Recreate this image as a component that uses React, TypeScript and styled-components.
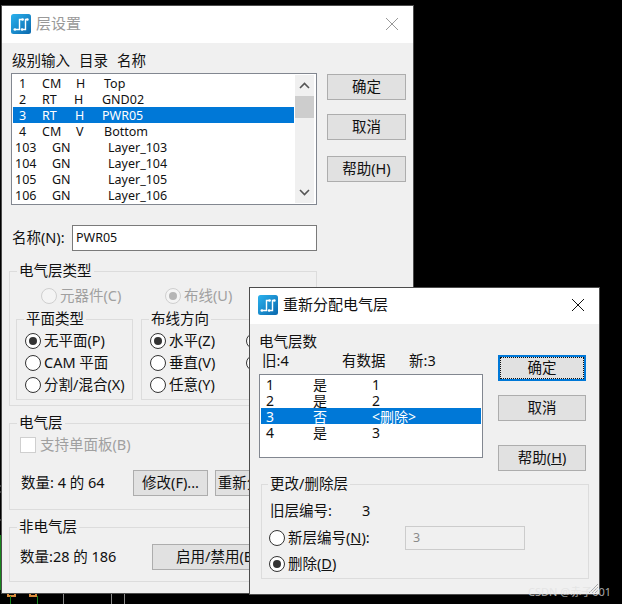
import React from 'react';
import styled, { createGlobalStyle } from 'styled-components';

const GlobalStyle = createGlobalStyle`
  html, body {
    margin: 0;
    background: #000;
  }
  body {
    font-family: "Noto Sans", "Noto Sans CJK SC", sans-serif;
    font-size: 14.5px;
    line-height: 16px;
    color: #111;
  }
  * {
    box-sizing: border-box;
  }
`;

interface WindowProps {
  $left: number;
  $top: number;
  $width: number;
  $height: number;
}

const Desktop = styled.div`
  position: relative;
  width: 622px;
  height: 604px;
  overflow: hidden;
  background: #000;
`;

const Backdrop = styled.svg`
  position: absolute;
  left: 0;
  top: 0;
`;

const Window = styled.div<WindowProps>`
  position: absolute;
  left: ${p => p.$left}px;
  top: ${p => p.$top}px;
  width: ${p => p.$width}px;
  height: ${p => p.$height}px;
  display: flex;
  flex-direction: column;
  background: #f0f0f0;
  border: 1px solid #4c4c4c;
  overflow: hidden;
`;

const TitleBar = styled.div<{ $height: number; $pad: number; $bottom: number }>`
  height: ${p => p.$height}px;
  flex: none;
  display: flex;
  align-items: center;
  gap: 5px;
  padding: 0 0 ${p => p.$bottom}px ${p => p.$pad}px;
  background: #fff;
`;

const TitleText = styled.span<{ $inactive?: boolean }>`
  flex: 1;
  padding-bottom: 2px;
  font-size: 15px;
  color: ${p => (p.$inactive ? '#999' : '#111')};
`;

const IconBox = styled.svg`
  flex: none;
`;

const CloseBox = styled.svg`
  flex: none;
  margin-right: 14px;
`;

const Body = styled.div<{ $top: number }>`
  flex: 1;
  padding: ${p => p.$top}px 0 0 9px;
`;

const TopRow = styled.div`
  display: flex;
`;

const Column = styled.div<{ $width: number }>`
  width: ${p => p.$width}px;
  flex: none;
`;

const ColumnHead = styled.div`
  display: flex;
  gap: 9px;
  height: 21px;
  margin-left: 1px;
`;

const ButtonColumn = styled.div<{ $left: number; $top: number }>`
  display: flex;
  flex-direction: column;
  align-items: flex-start;
  margin-left: ${p => p.$left}px;
  padding-top: ${p => p.$top}px;
`;

const Button = styled.button<{ $width?: number; $top?: number; $left?: number; $default?: boolean }>`
  position: relative;
  width: ${p => p.$width || 79}px;
  height: 26px;
  flex: none;
  margin: ${p => p.$top || 0}px 0 0 ${p => p.$left || 0}px;
  padding: 0 0 2px;
  font: inherit;
  color: #111;
  white-space: nowrap;
  overflow: hidden;
  background: #e1e1e1;
  border: ${p => (p.$default ? '2px solid #0078d7' : '1px solid #adadad')};
  outline: ${p => (p.$default ? '1px dotted #111' : 'none')};
  outline-offset: -3px;
`;

const ListBox = styled.div<{ $height: number; $top?: number }>`
  display: flex;
  height: ${p => p.$height}px;
  margin-top: ${p => p.$top || 0}px;
  padding: 1px;
  background: #fff;
  border: 1px solid #828790;
  overflow: hidden;
`;

const ListRows = styled.div`
  flex: 1;
  min-width: 0;
`;

const ListRow = styled.div<{ $cols: string; $indent: number; $size: number; $selected?: boolean }>`
  display: grid;
  grid-template-columns: ${p => p.$cols};
  height: 16px;
  padding-left: ${p => p.$indent}px;
  font-size: ${p => p.$size}px;
  line-height: 17px;
  white-space: nowrap;
  background: ${p => (p.$selected ? '#0078d7' : 'transparent')};
  color: ${p => (p.$selected ? '#fff' : '#111')};
`;

const ScrollBar = styled.div`
  width: 19px;
  flex: none;
  margin: 0 1px 0 1px;
  display: flex;
  flex-direction: column;
  align-items: stretch;
  background: #f0f0f0;
`;

const ScrollArrow = styled.svg`
  display: block;
  width: 19px;
  height: 21px;
  flex: none;
`;

const ScrollThumb = styled.div`
  height: 22px;
  flex: none;
  background: #cdcdcd;
`;

const ScrollTrack = styled.div`
  flex: 1;
`;

const NameRow = styled.div`
  display: flex;
  align-items: center;
  margin-top: 20px;
  padding-left: 1px;
`;

const NameLabel = styled.label`
  width: 60px;
  flex: none;
  padding-bottom: 2px;
`;

const TextField = styled.div<{ $width: number; $height: number; $disabled?: boolean }>`
  width: ${p => p.$width}px;
  height: ${p => p.$height}px;
  display: flex;
  align-items: center;
  padding-left: ${p => (p.$disabled ? 7 : 3)}px;
  font-size: 12.5px;
  background: ${p => (p.$disabled ? '#f0f0f0' : '#fff')};
  border: 1px solid ${p => (p.$disabled ? '#ccc' : '#7a7a7a')};
  color: ${p => (p.$disabled ? '#8a8a8a' : '#111')};
`;

const GroupBox = styled.div<{ $width: number; $height: number; $top: number; $left?: number; $pad: string }>`
  position: relative;
  width: ${p => p.$width}px;
  height: ${p => p.$height}px;
  flex: none;
  margin-top: ${p => p.$top}px;
  margin-left: ${p => p.$left || 0}px;
  padding: ${p => p.$pad};
  border: 1px solid #dcdcdc;
`;

const GroupTitle = styled.span<{ $left: number }>`
  position: absolute;
  top: -10px;
  left: ${p => p.$left}px;
  padding: 0 2px;
  background: #f0f0f0;
  white-space: nowrap;
`;

const ChoiceRow = styled.div`
  display: grid;
  grid-template-columns: 124px 1fr;
  margin-left: 31px;
`;

const SubGroups = styled.div`
  display: flex;
  gap: 8px;
  padding-left: 6px;
`;

const ChoiceStack = styled.div<{ $gap: number }>`
  display: flex;
  flex-direction: column;
  gap: ${p => p.$gap}px;
`;

const ChoiceGrid = styled.div`
  display: grid;
  grid-template-columns: 96px 1fr;
  row-gap: 6px;
`;

const Choice = styled.div<{ $disabled?: boolean }>`
  display: flex;
  align-items: center;
  gap: 3px;
  height: 16px;
  white-space: nowrap;
  color: ${p => (p.$disabled ? '#a0a0a0' : '#111')};
`;

const ChoiceLabel = styled.span`
  margin-top: -2px;
`;

const RadioCircle = styled.span<{ $checked?: boolean; $disabled?: boolean }>`
  width: 16px;
  height: 16px;
  flex: none;
  display: flex;
  align-items: center;
  justify-content: center;
  border-radius: 50%;
  background: ${p => (p.$disabled ? '#f4f4f4' : '#fff')};
  border: 1px solid ${p => (p.$disabled ? '#cfcfcf' : '#333')};

  &::after {
    content: '';
    display: ${p => (p.$checked ? 'block' : 'none')};
    width: 8px;
    height: 8px;
    border-radius: 50%;
    background: ${p => (p.$disabled ? '#b5b5b5' : '#333')};
  }
`;

const CheckBox = styled.span`
  width: 16px;
  height: 16px;
  flex: none;
  background: #fff;
  border: 1px solid #cfcfcf;
`;

const CheckLine = styled(Choice)`
  gap: 4px;
`;

const ActionRow = styled.div<{ $top: number; $label: number; $indent: number }>`
  display: grid;
  grid-template-columns: ${p => p.$label}px auto 1fr;
  align-items: center;
  margin-top: ${p => p.$top}px;
  padding-left: ${p => p.$indent}px;
  white-space: nowrap;
`;

const CountText = styled.span`
  padding-bottom: 2px;
`;

const CountRow = styled.div`
  display: grid;
  grid-template-columns: 80px 67px 1fr;
  height: 19px;
  padding-left: 3px;
`;

const PlainLine = styled.div`
  height: 19px;
`;

const FieldLine = styled.div<{ $top?: number }>`
  display: grid;
  grid-template-columns: 136px auto;
  align-items: center;
  margin-top: ${p => p.$top || 0}px;
`;

const OldLayerLine = styled.div`
  display: grid;
  grid-template-columns: 92px auto;
  height: 16px;
  padding-left: 1px;
`;

const Grip = styled.svg`
  position: absolute;
  right: 0;
  bottom: 0;
`;

const Watermark = styled.span`
  position: absolute;
  left: 528px;
  top: 584px;
  font-size: 11px;
  white-space: nowrap;
  color: rgba(225, 225, 225, 0.75);
`;

const AppIcon = () => (
  <IconBox width="20" height="20" viewBox="0 0 20 20">
    <defs>
      <linearGradient id="iconFill" x1="0" y1="0" x2="1" y2="1">
        <stop offset="0" stopColor="#2bb2ee" />
        <stop offset="1" stopColor="#0a68ad" />
      </linearGradient>
    </defs>
    <rect width="20" height="20" rx="2.5" fill="url(#iconFill)" />
    <path d="M4 15.5h4.5V5.5h3M11 15.5h3.5V5.5h2" fill="none" stroke="#fff" strokeWidth="1.4" />
    <circle cx="3.8" cy="15.5" r="1.3" fill="#fff" />
    <circle cx="11" cy="15.5" r="1.3" fill="#fff" />
    <circle cx="11.6" cy="5.5" r="1.3" fill="#fff" />
    <circle cx="16.4" cy="5.5" r="1.3" fill="#fff" />
  </IconBox>
);

const CloseIcon = ({ color }: { color: string }) => (
  <CloseBox width="14" height="14" viewBox="0 0 14 14">
    <path d="M1 1l12 12M13 1L1 13" stroke={color} strokeWidth="1" fill="none" />
  </CloseBox>
);

const Radio = ({ label, checked, disabled }: { label?: React.ReactNode; checked?: boolean; disabled?: boolean }) => (
  <Choice $disabled={disabled}>
    <RadioCircle $checked={checked} $disabled={disabled} />
    {label && <ChoiceLabel>{label}</ChoiceLabel>}
  </Choice>
);

const layerRows = [
  { indent: 6, cols: '23px 34px 28px 1fr', cells: ['1', 'CM', 'H', 'Top'] },
  { indent: 6, cols: '23px 32px 28px 1fr', cells: ['2', 'RT', 'H', 'GND02'] },
  { indent: 6, cols: '23px 33px 27px 1fr', cells: ['3', 'RT', 'H', 'PWR05'], selected: true },
  { indent: 6, cols: '23px 34px 28px 1fr', cells: ['4', 'CM', 'V', 'Bottom'] },
  { indent: 2, cols: '37px 56px 1fr', cells: ['103', 'GN', 'Layer_103'] },
  { indent: 2, cols: '37px 56px 1fr', cells: ['104', 'GN', 'Layer_104'] },
  { indent: 2, cols: '37px 56px 1fr', cells: ['105', 'GN', 'Layer_105'] },
  { indent: 2, cols: '37px 56px 1fr', cells: ['106', 'GN', 'Layer_106'] },
];

const remapRows = [
  { cells: ['1', '是', '1'] },
  { cells: ['2', '是', '2'] },
  { cells: ['3', '否', '<删除>'], selected: true },
  { cells: ['4', '是', '3'] },
];

const LayerSettings = () => (
  <Window $left={1} $top={5} $width={413} $height={589}>
    <TitleBar $height={37} $pad={9} $bottom={1}>
      <AppIcon />
      <TitleText $inactive>层设置</TitleText>
      <CloseIcon color="#999" />
    </TitleBar>
    <Body $top={9}>
      <TopRow>
        <Column $width={306}>
          <ColumnHead>
            <span>级别输入</span>
            <span>目录</span>
            <span>名称</span>
          </ColumnHead>
          <ListBox $height={132}>
            <ListRows>
              {layerRows.map(row => (
                <ListRow key={row.cells[0]} $cols={row.cols} $indent={row.indent} $size={12.5} $selected={row.selected}>
                  {row.cells.map((cell, i) => <span key={i}>{cell}</span>)}
                </ListRow>
              ))}
            </ListRows>
            <ScrollBar>
              <ScrollArrow viewBox="0 0 19 21">
                <path d="M5 13l4.5-4.5L14 13" fill="none" stroke="#555" strokeWidth="1.6" />
              </ScrollArrow>
              <ScrollThumb />
              <ScrollTrack />
              <ScrollArrow viewBox="0 0 19 21">
                <path d="M5 8l4.5 4.5L14 8" fill="none" stroke="#555" strokeWidth="1.6" />
              </ScrollArrow>
            </ScrollBar>
          </ListBox>
        </Column>
        <ButtonColumn $left={10} $top={22}>
          <Button>确定</Button>
          <Button $top={14}>取消</Button>
          <Button $top={16}>帮助(H)</Button>
        </ButtonColumn>
      </TopRow>

      <NameRow>
        <NameLabel>名称(N):</NameLabel>
        <TextField $width={245} $height={26}>PWR05</TextField>
      </NameRow>

      <GroupBox $width={308} $height={135} $top={20} $left={-2} $pad="16px 0 0 0">
        <GroupTitle $left={7}>电气层类型</GroupTitle>
        <ChoiceRow>
          <Radio disabled label="元器件(C)" />
          <Radio disabled checked label="布线(U)" />
        </ChoiceRow>
        <SubGroups>
          <GroupBox $width={117} $height={81} $top={15} $pad="13px 0 0 8px">
            <GroupTitle $left={7}>平面类型</GroupTitle>
            <ChoiceStack $gap={6}>
              <Radio checked label="无平面(P)" />
              <Radio label="CAM 平面" />
              <Radio label="分割/混合(X)" />
            </ChoiceStack>
          </GroupBox>
          <GroupBox $width={171} $height={81} $top={15} $pad="13px 0 0 8px">
            <GroupTitle $left={7}>布线方向</GroupTitle>
            <ChoiceGrid>
              <Radio checked label="水平(Z)" />
              <Radio />
              <Radio label="垂直(V)" />
              <Radio />
              <Radio label="任意(Y)" />
            </ChoiceGrid>
          </GroupBox>
        </SubGroups>
      </GroupBox>

      <GroupBox $width={308} $height={87} $top={17} $left={-2} $pad="13px 0 0 10px">
        <GroupTitle $left={7}>电气层</GroupTitle>
        <CheckLine $disabled>
          <CheckBox />
          <ChoiceLabel>支持单面板(B)</ChoiceLabel>
        </CheckLine>
        <ActionRow $top={17} $label={112} $indent={1}>
          <CountText>数量: 4 的 64</CountText>
          <Button $width={75}>修改(F)...</Button>
          <Button $width={75} $left={7}>重新分配...</Button>
        </ActionRow>
      </GroupBox>

      <GroupBox $width={308} $height={55} $top={17} $left={-2} $pad="16px 0 0 10px">
        <GroupTitle $left={7}>非电气层</GroupTitle>
        <ActionRow $top={0} $label={132} $indent={0}>
          <CountText>数量:28 的 186</CountText>
          <Button $width={140}>启用/禁用(E)...</Button>
        </ActionRow>
      </GroupBox>
    </Body>
  </Window>
);

const ReassignLayers = () => (
  <Window $left={249} $top={287} $width={351} $height={308}>
    <TitleBar $height={36} $pad={8} $bottom={2}>
      <AppIcon />
      <TitleText>重新分配电气层</TitleText>
      <CloseIcon color="#111" />
    </TitleBar>
    <Body $top={9}>
      <TopRow>
        <Column $width={224}>
          <PlainLine>电气层数</PlainLine>
          <CountRow>
            <span>旧:4</span>
            <span>有数据</span>
            <span>新:3</span>
          </CountRow>
          <ListBox $height={84} $top={3}>
            <ListRows>
              {remapRows.map(row => (
                <ListRow key={row.cells[0]} $cols="47px 59px 1fr" $indent={5} $size={14} $selected={row.selected}>
                  {row.cells.map((cell, i) => <span key={i}>{cell}</span>)}
                </ListRow>
              ))}
            </ListRows>
          </ListBox>
        </Column>
        <ButtonColumn $left={15} $top={22}>
          <Button $width={88} $default>确定</Button>
          <Button $width={88} $top={14}>取消</Button>
          <Button $width={88} $top={24}>帮助(<u>H</u>)</Button>
        </ButtonColumn>
      </TopRow>
      <GroupBox $width={328} $height={95} $top={13} $left={2} $pad="17px 0 0 7px">
        <GroupTitle $left={6}>更改/删除层</GroupTitle>
        <OldLayerLine>
          <span>旧层编号:</span>
          <span>3</span>
        </OldLayerLine>
        <FieldLine $top={8}>
          <Radio label={<>新层编号(<u>N</u>):</>} />
          <TextField $width={120} $height={24} $disabled>3</TextField>
        </FieldLine>
        <FieldLine $top={6}>
          <Radio checked label={<>删除(<u>D</u>)</>} />
        </FieldLine>
      </GroupBox>
    </Body>
    <Grip width="12" height="12" viewBox="0 0 12 12">
      <path d="M11 2L2 11M11 5l-6 6M11 8l-3 3" stroke="#a8a8a8" strokeWidth="1" fill="none" />
    </Grip>
  </Window>
);

export default function App() {
  return (
    <Desktop>
      <GlobalStyle />
      <Backdrop width="622" height="604" viewBox="0 0 622 604">
        <rect x="0" y="535" width="2" height="55" fill="#17861c" />
        <path d="M0 486h1M0 492h1M0 520h1" stroke="#777" strokeWidth="1" />
        <path d="M8 594v2h7v-2M30 594v2h6v-2" fill="none" stroke="#d98a3a" strokeWidth="2" />
        <path d="M10.5 596v8M37.5 596v8" stroke="#17861c" strokeWidth="1" />
        <path d="M63.5 594v10M111.5 594v10M124.5 594v10" stroke="#8a8a8a" strokeWidth="1" />
      </Backdrop>
      <LayerSettings />
      <ReassignLayers />
      <Watermark>CSDN @赤子001</Watermark>
    </Desktop>
  );
}
